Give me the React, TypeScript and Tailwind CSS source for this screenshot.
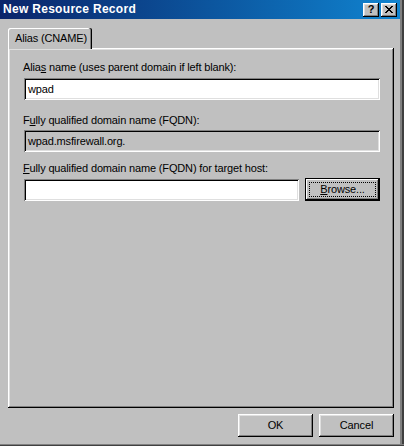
import React from "react";

const raised =
  "shadow-[inset_-1px_-1px_0_#000,inset_1px_1px_0_#fff,inset_-2px_-2px_0_#808080,inset_2px_2px_0_#dfdfdf]";
const sunken =
  "shadow-[inset_1px_1px_0_#808080,inset_-1px_-1px_0_#fff,inset_2px_2px_0_#000,inset_-2px_-2px_0_#dfdfdf]";

function U({ children }: { children: React.ReactNode }) {
  return <span className="underline underline-offset-[1px]">{children}</span>;
}

function TitleButton({ children }: { children: React.ReactNode }) {
  return (
    <div
      className={`flex h-[14px] w-[16px] items-center justify-center bg-[#c0c0c0] ${raised}`}
    >
      {children}
    </div>
  );
}

function Button({ children }: { children: React.ReactNode }) {
  return (
    <div
      className={`flex h-[23px] w-[75px] items-center justify-center bg-[#c0c0c0] text-black ${raised}`}
    >
      {children}
    </div>
  );
}

export default function App() {
  return (
    <div className="flex h-[446px] w-[404px] flex-col bg-[#c0c0c0] font-['Liberation_Sans',Arial,sans-serif] text-[11px] leading-[13px] tracking-[-0.15px] text-black">
      <div className="flex flex-1">
        <div className="flex w-[400px] flex-col">
          {/* title bar */}
          <div className="flex h-[19px] items-center bg-gradient-to-r from-[#0a246a] to-[#1084d0] pl-[3px] pr-[3px]">
            <div className="flex-1 text-[12px] font-bold tracking-[0.3px] text-white">
              New Resource Record
            </div>
            <div className="flex gap-[2px]">
              <TitleButton>
                <span className="text-[11px] font-bold leading-none text-black">?</span>
              </TitleButton>
              <TitleButton>
                <svg width="8" height="7" viewBox="0 0 8 7">
                  <path
                    d="M0 0h2v1h1v1h2v-1h1v-1h2v1h-1v1h-1v1h-1v1h1v1h1v1h1v1h-2v-1h-1v-1h-2v1h-1v1h-2v-1h1v-1h1v-1h1v-1h-1v-1h-1v-1h-1z"
                    fill="#000"
                  />
                </svg>
              </TitleButton>
            </div>
          </div>

          {/* body */}
          <div className="flex flex-1 flex-col pl-[8px] pr-[6px] pt-[9px]">
            {/* tab strip */}
            <div className="flex">
              <div className="relative z-10 -mb-px flex h-[21px] w-[84px] items-center rounded-t-[2px] bg-[#c0c0c0] pl-[7px] shadow-[inset_-1px_0_0_#000,inset_-2px_0_0_#808080,inset_1px_1px_0_#fff]">
                Alias (CNAME)
              </div>
            </div>

            {/* panel */}
            <div className={`flex h-[360px] flex-col bg-[#c0c0c0] pl-[15px] pr-[14px] pt-[13px] ${raised}`}>
              <div className="mb-[4px]">
                Alia<U>s</U> name (uses parent domain if left blank):
              </div>
              <div className={`ml-px flex h-[22px] items-center bg-white pl-[4px] ${sunken}`}>wpad</div>

              <div className="mb-[3px] mt-[14px]">
                F<U>u</U>lly qualified domain name (FQDN):
              </div>
              <div className={`ml-px flex h-[22px] items-center bg-[#c0c0c0] pl-[4px] ${sunken}`}>
                wpad.msfirewall.org.
              </div>

              <div className="mb-[3px] mt-[10px]">
                <U>F</U>ully qualified domain name (FQDN) for target host:
              </div>
              <div className="ml-px flex items-center gap-[6px]">
                <div className={`h-[22px] w-[275px] bg-white ${sunken}`} />
                <div className="h-[23px] w-[75px] border border-black bg-[#c0c0c0]">
                  <div className="flex h-full w-full p-[3px] shadow-[inset_-1px_-1px_0_#000,inset_1px_1px_0_#fff,inset_-2px_-2px_0_#808080]">
                    <div className="flex flex-1 items-center justify-center border border-dotted border-black">
                      <span>
                        <U>B</U>rowse...
                      </span>
                    </div>
                  </div>
                </div>
              </div>
            </div>

            {/* buttons */}
            <div className="mt-[6px] flex justify-end gap-[6px]">
              <Button>OK</Button>
              <Button>Cancel</Button>
            </div>
          </div>
        </div>
        {/* right border */}
        <div className="flex">
          <div className="w-[2px] bg-[#808080]" />
          <div className="w-[2px] bg-[#404040]" />
        </div>
      </div>
      <div className="h-[1px] bg-[#808080]" />
      <div className="h-[1px] bg-[#404040]" />
    </div>
  );
}
